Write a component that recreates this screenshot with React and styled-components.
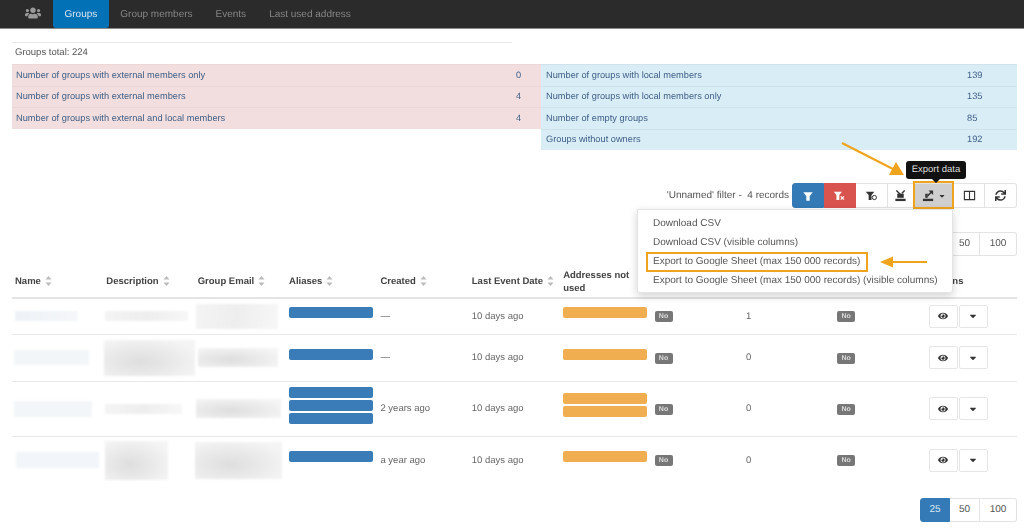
import React from 'react';
import styled, { createGlobalStyle } from 'styled-components';
import { FaUsers, FaEye, FaCaretDown, FaSync } from 'react-icons/fa';

const GlobalStyle = createGlobalStyle`
html, body {
	margin: 0;
	padding: 0;
	background: #fff;
}
body {
	font-family: "Liberation Sans", Arial, sans-serif;
	font-size: 9.5px;
	color: #555;
	text-rendering: geometricPrecision;
}
`;

const Page = styled.div`
position: relative;
width: 1024px;
height: 528px;
overflow: hidden;
filter: blur(0.35px);
`;

const Navbar = styled.nav`
height: 28px;
background: #2b2b2b;
border-bottom: 1px solid #8a8a8a;
display: flex;
align-items: stretch;
padding-left: 25px;
`;

const Brand = styled.div`
width: 28px;
display: flex;
align-items: center;
color: #9a9a9a;
font-size: 16px;
margin-top: -2px;
`;

const NavItem = styled.div`
display: flex;
align-items: center;
padding: 0 11.5px;
font-size: 10px;
color: ${(p) => (p.$active ? '#d6e6f3' : '#858585')};
background: ${(p) => (p.$active ? '#0271b6' : 'transparent')};
border-radius: ${(p) => (p.$active ? '0 0 3px 3px' : '0')};
`;

const Content = styled.main`
padding: 13px 7px 0 12px;
`;

const TotalLine = styled.div`
width: 500px;
height: 22px;
box-sizing: border-box;
border-top: 1px solid #e8e8e8;
padding-left: 3px;
line-height: 20px;
font-size: 9.5px;
color: #555;
`;

const StatsRow = styled.section`
display: flex;
align-items: flex-start;
`;

const StatsTable = styled.div`
width: ${(p) => p.$width}px;
background: ${(p) => p.$bg};
`;

const StatRow = styled.div`
height: 21.5px;
display: flex;
align-items: center;
justify-content: space-between;
padding: 0 0 1px ${(p) => p.$inset}px;
color: #3f5f86;
font-size: 9.25px;
border-top: 1px solid ${(p) => p.$line};
box-sizing: border-box;
`;

const StatValue = styled.span`
width: ${(p) => p.$width}px;
`;

const Toolbar = styled.div`
position: relative;
margin-top: 33px;
display: flex;
justify-content: flex-end;
align-items: center;
gap: 3px;
height: 25px;
`;

const RecordText = styled.span`
font-size: 10px;
color: #555;
`;

const ButtonGroup = styled.div`
display: flex;
height: 25px;
border-radius: 3px;
`;

const ToolButton = styled.div`
position: relative;
width: ${(p) => p.$width || 32}px;
box-sizing: border-box;
display: flex;
align-items: center;
justify-content: center;
gap: 3px;
background: ${(p) => p.$bg || '#fff'};
color: ${(p) => p.$color || '#333'};
border: 1px solid ${(p) => p.$border || '#e3e3e3'};
border-left-width: ${(p) => (p.$first ? 1 : 0)}px;
border-radius: ${(p) => (p.$first ? '3px 0 0 3px' : p.$last ? '0 3px 3px 0' : '0')};
z-index: ${(p) => (p.$marked ? 2 : 0)};
`;

const MarkFrame = styled.span`
position: absolute;
left: -1px;
right: -1px;
top: -3px;
bottom: -2px;
border: 2px solid #f0a31c;
`;

const Tooltip = styled.div`
position: absolute;
left: -8px;
top: -23px;
width: 60px;
height: 18px;
line-height: 18px;
text-align: center;
font-size: 9.5px;
color: #ddd;
background: #111;
border-radius: 3px;
&:after {
	content: '';
	position: absolute;
	left: 26px;
	bottom: -4px;
	border-top: 4px solid #111;
	border-left: 4px solid transparent;
	border-right: 4px solid transparent;
}
`;

const Dropdown = styled.div`
position: absolute;
left: 625px;
top: 26px;
width: 316px;
height: 84px;
box-sizing: border-box;
padding: 4px 0;
background: #fff;
border: 1px solid #e4e4e4;
border-radius: 0 0 3px 3px;
box-shadow: 0 3px 8px rgba(0, 0, 0, 0.18);
z-index: 3;
`;

const DropdownItem = styled.div`
height: 19px;
line-height: 19px;
padding-left: 15px;
font-size: 10px;
color: #555;
`;

const MarkedText = styled.span`
display: inline-block;
height: 16px;
line-height: 16px;
padding: 0 6px 0 5px;
margin-left: -5px;
outline: 2px solid #f0a31c;
`;

const PageSizes = styled.div`
display: flex;
justify-content: flex-end;
`;

const SizeButton = styled.div`
height: 24px;
width: ${(p) => p.$width}px;
box-sizing: border-box;
line-height: 22px;
text-align: center;
font-size: 10px;
color: ${(p) => (p.$active ? '#dbe8f4' : '#555')};
background: ${(p) => (p.$active ? '#337ab7' : '#fff')};
border: 1px solid ${(p) => (p.$active ? '#337ab7' : '#e3e3e3')};
border-left-width: ${(p) => (p.$first ? 1 : 0)}px;
border-radius: ${(p) => (p.$first ? '3px 0 0 3px' : p.$last ? '0 3px 3px 0' : '0')};
`;

const TopSizes = styled(PageSizes)`
margin-top: 24px;
`;

const BottomSizes = styled(PageSizes)`
margin-top: 14px;
`;

const Table = styled.table`
width: 1005px;
margin-top: 7px;
table-layout: fixed;
border-collapse: collapse;
`;

const HeadCell = styled.th`
height: 35px;
padding: 3px 3px 0;
box-sizing: border-box;
text-align: left;
vertical-align: middle;
font-size: 9.5px;
line-height: 13px;
font-weight: bold;
color: #444;
border-bottom: 2px solid #e4e4e4;
`;

const Row = styled.tr`
height: ${(p) => p.$height}px;
border-top: ${(p) => (p.$first ? 0 : 1)}px solid #e8e8e8;
`;

const Cell = styled.td`
padding: 0 3px;
vertical-align: middle;
font-size: 9.5px;
color: #666;
`;

const Smudge = styled.div`
width: ${(p) => p.$w}px;
height: ${(p) => p.$h}px;
margin-left: ${(p) => p.$x}px;
background: ${(p) => p.$bg};
filter: blur(1px);
`;

const BarStack = styled.div`
margin-bottom: 7px;
`;

const Bar = styled.div`
width: ${(p) => p.$w}px;
height: 11px;
margin-left: ${(p) => p.$x}px;
margin-top: ${(p) => (p.$stacked ? 2 : 0)}px;
border-radius: 2px;
background: ${(p) => p.$bg};
`;

const NoBadge = styled.span`
display: inline-block;
width: 18px;
height: 11px;
line-height: 11px;
text-align: center;
font-size: 7px;
font-weight: bold;
color: #ddd;
background: #777;
border-radius: 2px;
`;

const Actions = styled.div`
display: flex;
gap: 1px;
`;

const RowButton = styled.div`
width: 29px;
height: 23px;
box-sizing: border-box;
display: flex;
align-items: center;
justify-content: center;
font-size: 10px;
color: #333;
background: #fff;
border: 1px solid #e6e6e6;
border-radius: 2px;
`;

const Annotations = styled.svg`
position: absolute;
left: 0;
top: 0;
pointer-events: none;
z-index: 4;
`;

const SortMark = styled.svg`
width: 7px;
height: 10px;
margin-left: 4px;
vertical-align: -2px;
fill: #bbb;
`;

const GlyphSvg = styled.svg`
width: ${(p) => p.$size || 13}px;
height: ${(p) => p.$size || 13}px;
fill: currentColor;
`;

const Sort = () => (
	<SortMark viewBox="0 0 7 10">
		<path d="M3.5 0 L6.5 3.5 H0.5 Z M3.5 10 L0.5 6.5 H6.5 Z" />
	</SortMark>
);

const Funnel = () => (
	<GlyphSvg $size={12} viewBox="0 0 14 14">
		<path d="M1.5 2.5 H12.5 L9 7 V12.5 H5 V7 Z" />
	</GlyphSvg>
);

const FunnelClear = () => (
	<GlyphSvg viewBox="0 0 16 14">
		<path d="M1 2.5 H11 L7.8 6.5 V12.5 H4.2 V6.5 Z" />
		<path d="M9.5 8 L13.5 12 M13.5 8 L9.5 12" stroke="currentColor" strokeWidth="1.5" />
	</GlyphSvg>
);

const FunnelSync = () => (
	<GlyphSvg viewBox="0 0 16 14">
		<path d="M1 2.5 H11.5 L8 6.5 V12.5 H4.5 V6.5 Z" />
		<circle cx="11.5" cy="9.5" r="2.6" fill="none" stroke="currentColor" strokeWidth="1.2" />
	</GlyphSvg>
);

const TrayIn = () => (
	<GlyphSvg viewBox="0 0 14 14">
		<path d="M1.5 10.5 H12.5 V13 H1.5 Z" />
		<path d="M3.5 5 H10.5 V9.5 H3.5 Z" />
		<path d="M2.5 1.5 L7 6 M11.5 1.5 L8.5 4.5" stroke="currentColor" strokeWidth="1.5" />
	</GlyphSvg>
);

const TrayOut = () => (
	<GlyphSvg viewBox="0 0 14 14">
		<path d="M1 10.5 H12 V13 H1 Z" />
		<path d="M3.5 9.5 V5 H7 L5 7.2 L6.5 9.5 Z" />
		<path d="M5.5 8 L10.5 3" stroke="currentColor" strokeWidth="1.6" />
		<path d="M7 1.5 H12 V6.5 Z" />
	</GlyphSvg>
);

const ColumnsGlyph = () => (
	<GlyphSvg viewBox="0 0 14 14">
		<path d="M1.5 2.5 H12.5 V11.5 H1.5 Z M7 2.5 V11.5" fill="none" stroke="currentColor" strokeWidth="1.2" />
	</GlyphSvg>
);

const blurBlue = 'linear-gradient(90deg, #eef2f6, #f5f7fa)';
const blurGrey = 'linear-gradient(100deg, #f4f4f4, #eeeeee 50%, #f7f7f7)';
const blurDark = 'radial-gradient(ellipse at 40% 60%, #dedede, #f4f4f4 80%)';
const blue = '#3a7cb8';
const orange = '#f0ae50';

const rows = [
	{
		height: 36, first: true, created: '—', count: '1', aliases: 1, addresses: 1,
		name: [63, 10, 0, blurBlue], desc: [83, 10, -1, blurGrey], mail: [82, 25, -2, blurGrey],
	},
	{
		height: 47, created: '—', count: '0', aliases: 1, addresses: 1,
		name: [75, 15, -1, '#f3f6f9'], desc: [91, 36, -2, blurDark], mail: [80, 19, 0, blurDark],
	},
	{
		height: 55, created: '2 years ago', count: '0', aliases: 3, addresses: 2,
		name: [78, 16, -1, '#f3f6f9'], desc: [77, 10, -1, blurGrey], mail: [85, 19, -2, blurDark],
	},
	{
		height: 48, created: 'a year ago', count: '0', aliases: 1, addresses: 1,
		name: [83, 16, 1, '#f2f5f9'], desc: [63, 39, -1, blurDark], mail: [87, 37, -3, blurDark],
	},
];

const Redacted = ({ spec }) => <Smudge $w={spec[0]} $h={spec[1]} $x={spec[2]} $bg={spec[3]} />;

const Bars = ({ count, width, x, bg }) => (
	<BarStack>
		{Array.from({ length: count }, (_, i) => (
			<Bar key={i} $w={width} $x={x} $bg={bg} $stacked={i > 0} />
		))}
	</BarStack>
);

const external = [
	['Number of groups with external members only', '0'],
	['Number of groups with external members', '4'],
	['Number of groups with external and local members', '4'],
];

const local = [
	['Number of groups with local members', '139'],
	['Number of groups with local members only', '135'],
	['Number of empty groups', '85'],
	['Groups without owners', '192'],
];

const headers = ['Name', 'Description', 'Group Email', 'Aliases', 'Created', 'Last Event Date', 'Addresses not used', '', '', '', 'Actions'];

const App = () => (
	<Page>
		<GlobalStyle />
		<Navbar>
			<Brand><FaUsers /></Brand>
			<NavItem $active>Groups</NavItem>
			<NavItem>Group members</NavItem>
			<NavItem>Events</NavItem>
			<NavItem>Last used address</NavItem>
		</Navbar>
		<Content>
			<TotalLine>Groups total: 224</TotalLine>
			<StatsRow>
				<StatsTable $width={529} $bg="#f2dede">
					{external.map(([label, value]) => (
						<StatRow key={label} $line="#ecd6d6" $inset={4}>
							<span>{label}</span>
							<StatValue $width={25}>{value}</StatValue>
						</StatRow>
					))}
				</StatsTable>
				<StatsTable $width={476} $bg="#d9edf7">
					{local.map(([label, value]) => (
						<StatRow key={label} $line="#d0e3ed" $inset={5}>
							<span>{label}</span>
							<StatValue $width={50}>{value}</StatValue>
						</StatRow>
					))}
				</StatsTable>
			</StatsRow>
			<Toolbar>
				<RecordText>'Unnamed' filter - &nbsp;4 records</RecordText>
				<ButtonGroup>
					<ToolButton $first $bg="#337ab7" $border="#337ab7" $color="#fff"><Funnel /></ToolButton>
					<ToolButton $bg="#d9534f" $border="#d9534f" $color="#fff"><FunnelClear /></ToolButton>
					<ToolButton><FunnelSync /></ToolButton>
					<ToolButton $width={26}><TrayIn /></ToolButton>
					<ToolButton $width={40} $bg="#cfcfcf" $marked>
						<TrayOut />
						<FaCaretDown size={8} />
						<MarkFrame />
						<Tooltip>Export data</Tooltip>
					</ToolButton>
					<ToolButton $width={31}><ColumnsGlyph /></ToolButton>
					<ToolButton $width={32} $last><FaSync size={11} /></ToolButton>
				</ButtonGroup>
				<Dropdown>
					<DropdownItem>Download CSV</DropdownItem>
					<DropdownItem>Download CSV (visible columns)</DropdownItem>
					<DropdownItem><MarkedText>Export to Google Sheet (max 150 000 records)</MarkedText></DropdownItem>
					<DropdownItem>Export to Google Sheet (max 150 000 records) (visible columns)</DropdownItem>
				</Dropdown>
			</Toolbar>
			<TopSizes>
				<SizeButton $width={30} $first $active>25</SizeButton>
				<SizeButton $width={30}>50</SizeButton>
				<SizeButton $width={37} $last>100</SizeButton>
			</TopSizes>
			<Table>
				<thead>
					<tr>
						{headers.map((title, i) => (
							<HeadCell key={i}>
								{title}
								{i < 6 && <Sort />}
							</HeadCell>
						))}
					</tr>
				</thead>
				<tbody>
					{rows.map((row, i) => (
						<Row key={i} $height={row.height} $first={row.first}>
							<Cell><Redacted spec={row.name} /></Cell>
							<Cell><Redacted spec={row.desc} /></Cell>
							<Cell><Redacted spec={row.mail} /></Cell>
							<Cell><Bars count={row.aliases} width={84} x={0} bg={blue} /></Cell>
							<Cell>{row.created}</Cell>
							<Cell>10 days ago</Cell>
							<Cell><Bars count={row.addresses} width={84} x={0} bg={orange} /></Cell>
							<Cell><NoBadge>No</NoBadge></Cell>
							<Cell>{row.count}</Cell>
							<Cell><NoBadge>No</NoBadge></Cell>
							<Cell>
								<Actions>
									<RowButton><FaEye /></RowButton>
									<RowButton><FaCaretDown /></RowButton>
								</Actions>
							</Cell>
						</Row>
					))}
				</tbody>
			</Table>
			<BottomSizes>
				<SizeButton $width={30} $first $active>25</SizeButton>
				<SizeButton $width={30}>50</SizeButton>
				<SizeButton $width={37} $last>100</SizeButton>
			</BottomSizes>
		</Content>
		<Annotations width="1024" height="528" viewBox="0 0 1024 528">
			<path d="M842 143 L893 169" stroke="#f0a31c" strokeWidth="2" fill="none" />
			<path d="M904 175 L889 175 L896 162 Z" fill="#f0a31c" />
			<path d="M927 262 L890 262" stroke="#f0a31c" strokeWidth="2" fill="none" />
			<path d="M880 262 L893 256.5 V267.5 Z" fill="#f0a31c" />
		</Annotations>
	</Page>
);

export default App;
